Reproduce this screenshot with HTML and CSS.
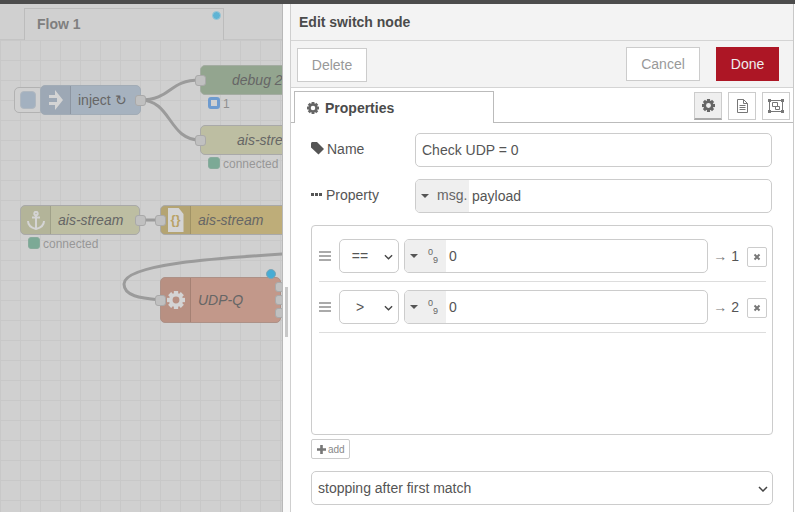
FILE: index.html
```html
<!DOCTYPE html>
<html lang="en">
<head>
<meta charset="utf-8">
<title>Edit switch node</title>
<link rel="stylesheet" href="styles.css">
</head>
<body>
<div class="topbar"></div>
<main class="app">
  <section class="workspace">
    <div class="tabbar">
      <div class="flow-tab">Flow 1<span class="tab-dot"></span></div>
    </div>
    <div class="canvas">
      <svg class="wires" width="282" height="472" viewBox="0 40 282 472">
        <g fill="none" stroke="#9b9b9b" stroke-width="3">
          <path d="M140 100C172 100 168 80 200 80"/>
          <path d="M140 100C172 100 168 140 200 140"/>
          <path d="M140 220H160"/>
          <path d="M283 254C220 258 124 264 124 284C124 296 140 298 160 300"/>
        </g>
      </svg>

      <div class="inject-btn"><span></span></div>
      <div class="node inject">
        <span class="node-icon"><svg width="14" height="20" viewBox="0 0 14 20"><path d="M6 0l8 10-8 10v-5H0v-3h8V8H0V5h6z" fill="#d4d4d4"/></svg></span>
        <span class="node-label plain">inject ↻</span>
      </div>
      <span class="port p-inject"></span>

      <div class="node debug"><span class="node-label">debug 2</span></div>
      <span class="port p-debug"></span>
      <div class="status s-debug"><span class="ring"></span>1</div>

      <div class="node stream-out"><span class="node-label">ais-stream</span></div>
      <span class="port p-stream-out"></span>
      <div class="status s-stream-out"><span class="dot"></span>connected</div>

      <div class="node stream-in">
        <span class="node-icon"><svg width="18" height="19" viewBox="0 0 18 19" fill="none" stroke="#d4d4d4" stroke-width="2"><circle cx="9" cy="2.500" r="1.700"/><path d="M5 6.500h8M9 4v14M1 10c0 5 4 7 8 8 4-1 8-3 8-8"/></svg></span>
        <span class="node-label">ais-stream</span>
      </div>
      <span class="port p-stream-in"></span>
      <div class="status s-stream-in"><span class="dot"></span>connected</div>

      <div class="node template">
        <span class="node-icon"><span class="doc">{}</span></span>
        <span class="node-label">ais-stream</span>
      </div>
      <span class="port p-template"></span>

      <div class="node udp">
        <span class="node-icon"><svg class="cog-light" width="18" height="18" viewBox="0 0 20 20"><use href="#cog"/></svg></span>
        <span class="node-label">UDP-Q</span>
      </div>
      <span class="port p-udp"></span>
      <span class="port small p-o1"></span>
      <span class="port small p-o2"></span>
      <span class="port small p-o3"></span>
      <span class="changed"></span>
    </div>
  </section>

  <div class="gutter"><span class="gutter-handle"></span></div>

  <section class="tray">
    <header class="tray-title">Edit switch node</header>
    <div class="tray-actions">
      <button class="btn">Delete</button>
      <span class="spacer"></span>
      <button class="btn cancel">Cancel</button>
      <button class="btn done">Done</button>
    </div>
    <div class="tray-tabs">
      <div class="prop-tab">
        <svg class="cog-dark" width="12" height="12" viewBox="0 0 20 20"><use href="#cog"/></svg>
        Properties
      </div>
      <div class="tab-icons">
        <span class="tab-icon active"><svg class="cog-dark" width="13" height="13" viewBox="0 0 20 20"><use href="#cog"/></svg></span>
        <span class="tab-icon"><svg width="13" height="14" viewBox="0 0 13 14" fill="none" stroke="#777"><path d="M1.500.5h6l4 4v9h-10zM7.500.5v4h4M3.500 6.500h6M3.500 8.500h6M3.500 10.500h6"/></svg></span>
        <span class="tab-icon"><svg width="16" height="14" viewBox="0 0 16 14" fill="none" stroke="#777"><path d="M1.500 1.500h13v11h-13z"/><path d="M4.500 3.500h5v4h-5zM7.500 7.500h4v3h-4z"/><g fill="#777" stroke="none"><rect width="3" height="3"/><rect x="13" width="3" height="3"/><rect y="11" width="3" height="3"/><rect x="13" y="11" width="3" height="3"/></g></svg></span>
      </div>
    </div>

    <div class="form">
      <div class="row">
        <label class="lbl"><svg width="13" height="13" viewBox="0 0 13 13"><path fill="#555" d="M0 1.500C0 .7.700 0 1.500 0H6l7 7-5.500 5.500-7.500-7z"/></svg>Name</label>
        <input class="field" value="Check UDP = 0">
      </div>
      <div class="row prop-row">
        <label class="lbl lbl-prop"><svg width="11" height="13" viewBox="0 0 11 13"><path fill="#555" d="M0 5h3v3H0zM4 5h3v3H4zM8 5h3v3H8z"/></svg>Property</label>
        <div class="typed">
          <span class="type-btn msg"><i class="caret"></i>msg.</span>
          <span class="typed-val">payload</span>
        </div>
      </div>

      <div class="rules">
        <div class="rule">
          <span class="grip"></span>
          <div class="select op"><span class="op-text">==</span><svg class="chev" width="9" height="6" viewBox="0 0 10 6"><path d="M1 1l4 4 4-4" fill="none" stroke="#444" stroke-width="1.500"/></svg></div>
          <div class="typed val">
            <span class="type-btn num"><i class="caret"></i><span class="digits"><sup>0</sup><sub>9</sub></span></span>
            <span class="typed-val">0</span>
          </div>
          <span class="out"><span class="arrow">→</span> 1</span>
          <span class="del"><svg width="8" height="8" viewBox="0 0 8 8"><path d="M1.500 1.500l5 5M6.500 1.500l-5 5" stroke="#777" stroke-width="2"/></svg></span>
        </div>
        <div class="rule">
          <span class="grip"></span>
          <div class="select op"><span class="op-text">&gt;</span><svg class="chev" width="9" height="6" viewBox="0 0 10 6"><path d="M1 1l4 4 4-4" fill="none" stroke="#444" stroke-width="1.500"/></svg></div>
          <div class="typed val">
            <span class="type-btn num"><i class="caret"></i><span class="digits"><sup>0</sup><sub>9</sub></span></span>
            <span class="typed-val">0</span>
          </div>
          <span class="out"><span class="arrow">→</span> 2</span>
          <span class="del"><svg width="8" height="8" viewBox="0 0 8 8"><path d="M1.500 1.500l5 5M6.500 1.500l-5 5" stroke="#777" stroke-width="2"/></svg></span>
        </div>
      </div>

      <button class="add"><svg width="9" height="9" viewBox="0 0 9 9"><path d="M3.200 0h2.600v3.200H9v2.600H5.800V9H3.200V5.800H0V3.200h3.200z" fill="#777"/></svg>add</button>

      <div class="select mode"><span>stopping after first match</span><svg class="chev" width="10" height="6" viewBox="0 0 10 6"><path d="M1 1l4 4 4-4" fill="none" stroke="#444" stroke-width="1.500"/></svg></div>
    </div>
  </section>
</main>

<svg class="defs" width="0" height="0">
  <defs>
    <g id="cog">
      <circle cx="10" cy="10" r="5.800" fill="none" stroke="currentColor" stroke-width="4"/>
      <g fill="currentColor">
        <rect x="7.600" y="0" width="4.800" height="4"/>
        <rect x="7.600" y="0" width="4.800" height="4" transform="rotate(45 10 10)"/>
        <rect x="7.600" y="0" width="4.800" height="4" transform="rotate(90 10 10)"/>
        <rect x="7.600" y="0" width="4.800" height="4" transform="rotate(135 10 10)"/>
        <rect x="7.600" y="0" width="4.800" height="4" transform="rotate(180 10 10)"/>
        <rect x="7.600" y="0" width="4.800" height="4" transform="rotate(225 10 10)"/>
        <rect x="7.600" y="0" width="4.800" height="4" transform="rotate(270 10 10)"/>
        <rect x="7.600" y="0" width="4.800" height="4" transform="rotate(315 10 10)"/>
      </g>
    </g>
  </defs>
</svg>
</body>
</html>
```

FILE: styles.css
```css
* { box-sizing: border-box; }
html, body { margin: 0; height: 100%; overflow: hidden; }
body { font-family: "Liberation Sans", Arial, sans-serif; font-size: 14px; color: #555; background: #fff; }
.defs { position: absolute; }
.cog-dark { color: #666; }
.cog-light { color: #d4d4d4; }

.topbar { height: 4px; background: #4c4c4c; }
.app { display: flex; height: 508px; }

.workspace { width: 282px; flex: none; background: #d0d0d0; overflow: hidden; display: flex; flex-direction: column; }
.tabbar { height: 36px; flex: none; padding: 4px 0 0 24px; border-bottom: 1px solid #c4c4c4; background: #d0d0d0; }
.flow-tab { position: relative; width: 200px; height: 32px; padding: 7px 0 0 12px; background: #d0d0d0; border: 1px solid #bcbcbc; border-bottom: 0; font-weight: 700; color: #7f7f7f; line-height: 16px; }
.tab-dot { position: absolute; right: 2px; top: 2px; width: 9px; height: 9px; border-radius: 50%; background: #5fb4d4; border: 1px solid #9cc6d6; }

.canvas {
  position: relative; flex: 1;
  background-color: #d0d0d0;
  background-image: linear-gradient(#c8c8c8 1px, transparent 1px), linear-gradient(90deg, #c8c8c8 1px, transparent 1px);
  background-size: 20px 20px;
}
.wires { position: absolute; left: 0; top: 0; }

.node { position: absolute; height: 30px; display: flex; align-items: center; border: 1px solid #a9a9a9; border-radius: 5px; color: #666; white-space: nowrap; overflow: hidden; }
.node-icon { width: 30px; height: 100%; flex: none; display: flex; align-items: center; justify-content: center; background: rgba(0,0,0,.05); border-right: 1px solid rgba(0,0,0,.1); }
.node-label { flex: 1; text-align: left; padding-left: 7px; font-style: italic; font-size: 14px; }
.node-label.plain { font-style: normal; }

.inject-btn { position: absolute; left: 14px; top: 47px; width: 30px; height: 26px; padding: 3px 5px; background: #d0d0d0; border: 1px solid #b2b2b2; border-radius: 5px; }
.inject-btn span { display: block; width: 16px; height: 18px; background: #a3b1c0; border: 1px solid #b0b8c0; border-radius: 4px; }
.inject { left: 40px; top: 45px; width: 101px; background: #a6b2bf; border-color: #a2acb6; }
.debug { left: 200px; top: 25px; width: 90px; background: #93a58f; border-color: #a4aca2; }
.debug .node-label { padding-left: 31px; }
.stream-out { left: 200px; top: 85px; width: 90px; background: #bdbea2; }
.stream-out .node-label { padding-left: 36px; }
.stream-in { left: 20px; top: 165px; width: 120px; background: #bdbea2; }
.template { left: 160px; top: 165px; width: 130px; background: #bead79; }
.udp { left: 160px; top: 237px; width: 121px; height: 46px; background: #c2988a; border-color: #ad9187; }
.doc { width: 16px; height: 24px; display: block; background: #d4d4d4; color: #b9a266; font-size: 13px; font-weight: 700; line-height: 23px; text-align: center; clip-path: polygon(0 0, 70% 0, 100% 25%, 100% 100%, 0 100%); }

.port { position: absolute; width: 11px; height: 11px; background: #c0c0c0; border: 1px solid #a9a9a9; border-radius: 3px; }
.port.small { width: 9px; height: 10px; }
.p-inject { left: 135px; top: 55px; }
.p-debug { left: 195px; top: 35px; }
.p-stream-out { left: 195px; top: 95px; }
.p-stream-in { left: 135px; top: 175px; }
.p-template { left: 155px; top: 175px; }
.p-udp { left: 155px; top: 255px; }
.p-o1 { left: 275px; top: 242px; }
.p-o2 { left: 275px; top: 255px; }
.p-o3 { left: 275px; top: 268px; }
.changed { position: absolute; left: 266px; top: 229px; width: 10px; height: 10px; border-radius: 50%; background: #47acd4; border: 1px solid #7da5b5; }

.status { position: absolute; display: flex; align-items: center; gap: 3px; font-size: 12px; color: #979797; line-height: 12px; }
.s-debug { left: 208px; top: 57px; color: #8f8f8f; }
.s-stream-out { left: 208px; top: 117px; }
.s-stream-in { left: 28px; top: 197px; }
.dot { width: 12px; height: 12px; margin-bottom: 2px; border-radius: 3px; background: #7ca996; border: 1px solid #88ab9c; }
.ring { width: 12px; height: 12px; margin-bottom: 2px; border-radius: 3px; border: 3px solid #6e9bcf; background: #d0d0d0; }

.gutter { width: 9px; flex: none; position: relative; background: #fafafa; border-left: 1px solid #b8b8b8; border-right: 1px solid #cfcfcf; }
.gutter-handle { position: absolute; left: 2px; top: 283px; width: 3px; height: 50px; background: #c8c8c8; }

.tray { width: 503px; flex: none; border-right: 1px solid #c8c8c8; display: flex; flex-direction: column; }
.tray-title { height: 37px; flex: none; padding: 10px 0 0 8px; background: #f3f3f3; border-bottom: 1px solid #d4d4d4; font-weight: 700; color: #4b4b4b; line-height: 16px; }
.tray-actions { height: 47px; flex: none; display: flex; align-items: flex-start; padding: 6px 14px 0 6px; background: #f3f3f3; border-bottom: 1px solid #d4d4d4; }
.spacer { flex: 1; }
.btn { height: 34px; margin-top: 1px; padding: 0; width: 70px; background: #fff; border: 1px solid #ccc; font: 14px "Liberation Sans", Arial, sans-serif; color: #999; }
.cancel { width: 74px; margin: 0 16px 0 0; }
.done { width: 63px; margin: 0; background: #ad1625; border: 0; color: #eee; }

.tray-tabs { height: 35px; flex: none; display: flex; justify-content: space-between; padding: 3px 3px 0 3px; background: #fff; border-bottom: 1px solid #bbb; }
.prop-tab { width: 200px; height: 32px; display: flex; align-items: center; gap: 6px; padding-left: 12px; background: #fff; border: 1px solid #bbb; border-bottom: 0; font-weight: 700; color: #4b4b4b; position: relative; z-index: 1; margin-bottom: -1px; }
.tab-icons { display: flex; gap: 6px; margin-top: 1px; }
.tab-icon { width: 28px; height: 28px; display: flex; align-items: center; justify-content: center; border: 1px solid #ccc; background: #fff; }
.tab-icon.active { background: #efefef; border-bottom: 2px solid #aaa; }

.form { padding: 10px 20px 0 20px; }
.row { display: flex; align-items: center; height: 34px; }
.prop-row { margin-top: 12px; }
.lbl { width: 104px; flex: none; display: flex; align-items: center; gap: 3px; margin-top: -3px; color: #555; }
.lbl-prop { gap: 4px; }
.field { width: 357px; height: 34px; padding: 0 6px; border: 1px solid #ccc; border-radius: 5px; font: 14px "Liberation Sans", Arial, sans-serif; color: #555; }
.typed { display: flex; align-items: center; height: 34px; border: 1px solid #ccc; border-radius: 5px; overflow: hidden; background: #fff; }
.prop-row .typed { width: 357px; }
.type-btn { display: flex; align-items: center; height: 100%; background: #efefef; flex: none; color: #666; }
.msg { width: 53px; padding: 0 0 3px 5px; gap: 8px; }
.msg .caret { margin-top: 3px; }
.typed-val { padding-left: 3px; color: #555; }
.caret { width: 0; height: 0; flex: none; border: 4.500px solid transparent; border-top: 4px solid #555; border-bottom: 0; }
.digits { position: relative; width: 12px; height: 20px; color: #666; }
.digits sup, .digits sub { position: absolute; line-height: 10px; font-size: 9px; }
.digits sup { left: 0; top: 1px; }
.digits sub { left: 5px; top: 9px; }

.rules { width: 462px; height: 210px; margin-top: 12px; padding: 5px 6px 0 7px; border: 1px solid #ccc; border-radius: 4px; }
.rule { display: flex; align-items: center; height: 51px; padding: 8px 0; border-bottom: 1px solid #ddd; }
.grip { width: 12px; height: 10px; flex: none; margin-right: 8px; background: linear-gradient(#aaa 2px, transparent 2px, transparent 4px, #aaa 4px, #aaa 6px, transparent 6px, transparent 8px, #aaa 8px); }
.select { position: relative; display: flex; align-items: center; height: 34px; background: #fff; border: 1px solid #ccc; border-radius: 5px; color: #555; }
.chev { position: absolute; right: 4px; top: 14px; }
.op { width: 60px; flex: none; }
.op .chev { right: 5px; }
.op-text { width: 40px; text-align: center; }
.val { width: 304px; flex: none; margin-left: 5px; }
.num { width: 41px; padding-left: 5px; gap: 10px; }
.out { width: 39px; flex: none; text-align: right; padding-right: 8px; white-space: nowrap; }
.arrow { color: #777; }
.del { width: 20px; height: 20px; flex: none; margin-top: 2px; display: flex; align-items: center; justify-content: center; border: 1px solid #ccc; border-radius: 2px; background: #fff; }

.add { display: flex; align-items: center; gap: 2px; width: 39px; height: 20px; margin-top: 4px; padding: 0 0 0 5px; background: #fff; border: 1px solid #ccc; border-radius: 2px; font: 10px "Liberation Sans", Arial, sans-serif; color: #888; }
.mode { width: 462px; margin-top: 12px; padding-left: 6px; }
```
